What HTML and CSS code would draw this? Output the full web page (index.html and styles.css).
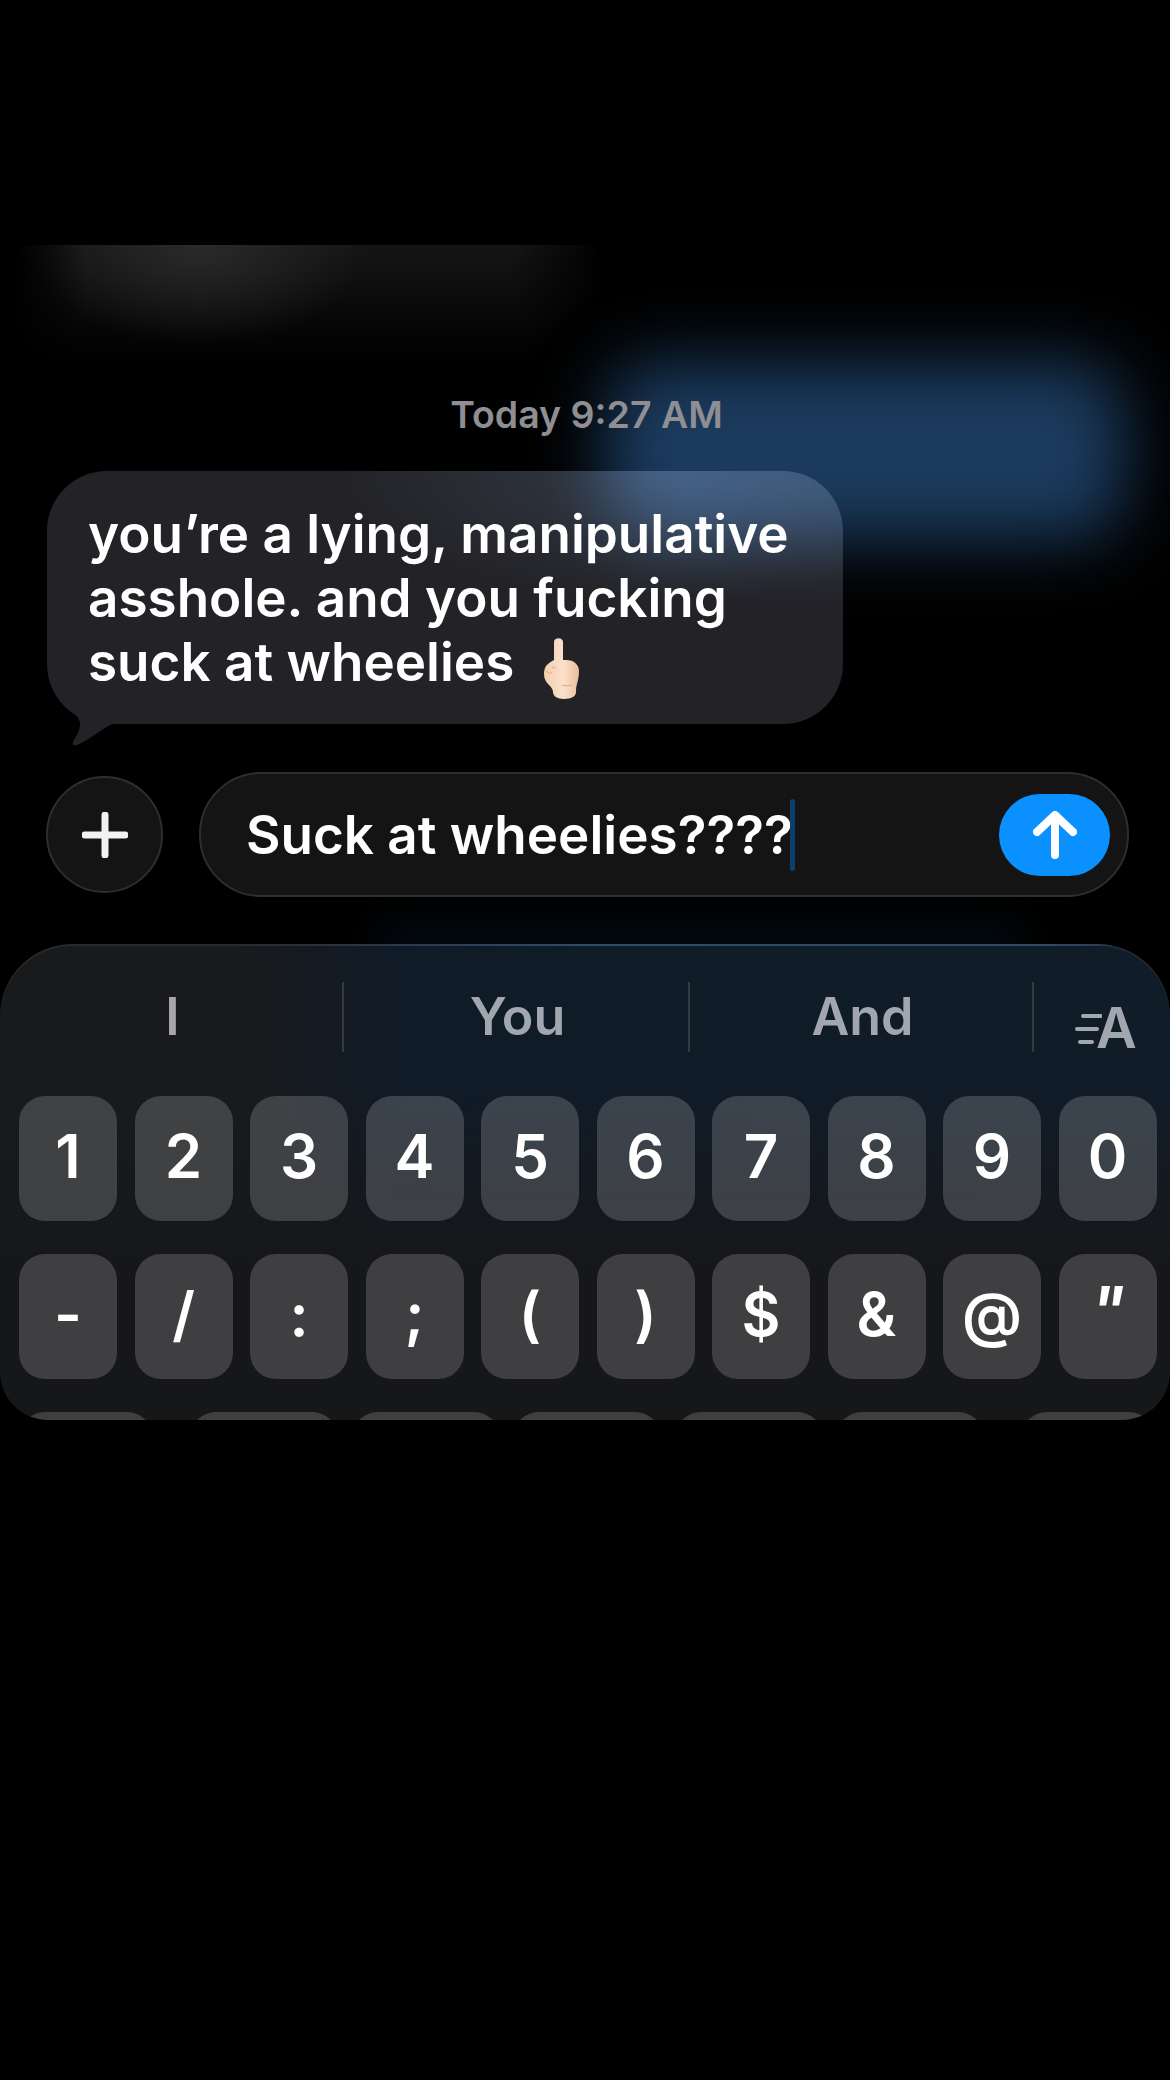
FILE: index.html
```html
<!DOCTYPE html>
<html lang="en">
<head>
    <meta charset="UTF-8">
    <meta name="viewport" content="width=device-width, initial-scale=1.0">
    <title>Messages</title>
    <link rel="stylesheet" href="styles.css">
</head>
<body>
    <div class="screen">
        <!-- blurred messages behind the focused one -->
        <div class="backdrop">
            <div class="blur-grey"></div>
            <div class="blur-blue"></div>
            <div class="blur-glow"></div>
        </div>

        <div class="thread">
            <div class="timestamp">Today 9:27 AM</div>
            <div class="bubble">
                you’re a lying, manipulative<br>
                asshole. and you fucking<br>
                suck at wheelies<svg class="emoji" viewBox="0 0 35 61" width="35" height="61">
                    <defs>
                        <linearGradient id="skin" x1="0" y1="0" x2="1" y2="0">
                            <stop offset="0" stop-color="#f3cfb2"/>
                            <stop offset="0.55" stop-color="#fbe0ca"/>
                            <stop offset="1" stop-color="#eabf9d"/>
                        </linearGradient>
                    </defs>
                    <path fill="url(#skin)" d="M10 22V4c0-5 9-5 9 0v18c4 0 8 0 11 2 3 2 5 5 5 9 0 5-1 9-2 13-1 3-1 6-1 8 0 4-4 7-12 7-7 0-11-3-11-7 0-2-1-4-4-7-3-3-5-6-5-11 0-4 1-8 4-10 2-2 4-3 6-4z"/>
                    <path fill="none" stroke="#d9a886" stroke-width="1" d="M3 33c1 3 3 3 5 1M8 28c1 3 3 3 4 1M18 47c3 1 7 1 10 0"/>
                </svg>
            </div>
            <svg class="bubble-tail" viewBox="47 660 90 90" width="90" height="90">
                <path d="M49 660C52 690 60 703 68 708C76 713 81 720 80 726C79 733 75 738 73 742C72 745 74 746 77 745C88 741 98 731 112 724L112 724C90 724 49 700 49 660Z"/>
            </svg>
        </div>

        <div class="composer">
            <div class="plus-btn">
                <svg viewBox="0 0 46 46" width="46" height="46">
                    <path d="M23 3v40M3 23h40"/>
                </svg>
            </div>
            <div class="input-box">
                <span class="input-text">Suck at wheelies????</span><span class="caret"></span>
                <div class="send-btn">
                    <svg viewBox="0 0 44 48" width="44" height="48">
                        <path d="M22 44V5M4 21L22 4l18 17"/>
                    </svg>
                </div>
            </div>
        </div>

        <div class="keyboard">
            <div class="suggestions">
                <div class="suggestion s-first">I</div>
                <div class="suggestion s-mid">You</div>
                <div class="suggestion s-last">And</div>
                <div class="text-size">
                    <svg viewBox="0 0 27 30" width="27" height="30">
                        <path d="M8 2h18M2 15h20M5 28h12"/>
                    </svg>
                    <span>A</span>
                </div>
            </div>
            <div class="key-row">
                <div class="key">1</div>
                <div class="key">2</div>
                <div class="key">3</div>
                <div class="key">4</div>
                <div class="key">5</div>
                <div class="key">6</div>
                <div class="key">7</div>
                <div class="key">8</div>
                <div class="key">9</div>
                <div class="key">0</div>
            </div>
            <div class="key-row">
                <div class="key">-</div>
                <div class="key">/</div>
                <div class="key">:</div>
                <div class="key">;</div>
                <div class="key">(</div>
                <div class="key">)</div>
                <div class="key">$</div>
                <div class="key">&amp;</div>
                <div class="key">@</div>
                <div class="key"><i>"</i></div>
            </div>
            <div class="key-row-last">
                <div class="key-wide k-first"></div>
                <div class="key-wide"></div>
                <div class="key-wide"></div>
                <div class="key-wide"></div>
                <div class="key-wide"></div>
                <div class="key-wide"></div>
                <div class="key-wide k-last"></div>
            </div>
        </div>
    </div>
</body>
</html>
```

FILE: styles.css
```css
html, body {
    margin: 0;
    background: #000;
}
body {
    font-family: Inter, "Liberation Sans", sans-serif;
    color: #fff;
}
.screen {
    position: relative;
    width: 1170px;
    height: 2080px;
    overflow: hidden;
    padding-top: 394px;
    box-sizing: border-box;
}

/* backdrop */
.backdrop {
    position: absolute;
    inset: 0;
}
.blur-grey {
    position: absolute;
    left: 14px;
    top: 245px;
    width: 590px;
    height: 115px;
    border-radius: 20px 20px 0 0;
    background:
        radial-gradient(ellipse 170px 100px at 185px 0, #2a2a2b, rgba(42,42,43,0)),
        linear-gradient(to bottom, #151516, rgba(21,21,22,0));
    -webkit-mask-image: linear-gradient(90deg, transparent 0, #000 70px, #000 500px, transparent 100%);
    mask-image: linear-gradient(90deg, transparent 0, #000 70px, #000 500px, transparent 100%);
}
.blur-blue {
    position: absolute;
    left: 605px;
    top: 362px;
    width: 520px;
    height: 178px;
    border-radius: 50px;
    background: #1b3b5e;
    filter: blur(34px);
}
.blur-glow {
    position: absolute;
    left: 380px;
    top: 925px;
    width: 640px;
    height: 30px;
    background: #030c15;
    filter: blur(18px);
}

/* thread */
.thread {
    position: relative;
    padding-left: 47px;
}
.timestamp {
    width: 1170px;
    margin-left: -47px;
    height: 44px;
    margin-bottom: 33px;
    padding-left: 3px;
    box-sizing: border-box;
    text-align: center;
    font-size: 37.5px;
    line-height: 42px;
    font-weight: 600;
    color: #8e8e93;
}
.bubble {
    width: 796px;
    height: 253px;
    box-sizing: border-box;
    padding: 31px 0 0 41px;
    border-radius: 60px;
    background:
        radial-gradient(ellipse 330px 130px at 78% 0, rgba(120,160,210,0.18), rgba(120,160,210,0)),
        rgba(230,230,255,0.153);
    font-size: 53px;
    line-height: 64px;
    font-weight: 600;
    white-space: nowrap;
}
.emoji {
    margin: -8px 0 -8px 30px;
    vertical-align: -10px;
}
.bubble-tail {
    position: absolute;
    left: 47px;
    top: 266px;
}
.bubble-tail path {
    fill: #232327;
}

/* composer */
.composer {
    position: relative;
    display: flex;
    align-items: center;
    gap: 36px;
    margin-top: 48px;
    padding: 0 41px 0 46px;
}
.plus-btn {
    flex: none;
    width: 117px;
    height: 117px;
    box-sizing: border-box;
    display: flex;
    align-items: center;
    justify-content: center;
    border: 2px solid #2e2e30;
    border-radius: 50%;
    background: #141414;
}
.plus-btn path {
    fill: none;
    stroke: #f2f2f2;
    stroke-width: 7;
    stroke-linecap: round;
}
.input-box {
    flex: 1;
    height: 125px;
    box-sizing: border-box;
    display: flex;
    align-items: center;
    padding: 0 17px 0 45px;
    border: 2px solid #2e2e30;
    border-radius: 62px;
    background: #141414;
}
.input-text {
    font-size: 53px;
    font-weight: 600;
    line-height: 72px;
    white-space: nowrap;
}
.caret {
    width: 5px;
    height: 72px;
    margin-left: -3px;
    border-radius: 3px;
    background: #0c3f6b;
}
.send-btn {
    flex: none;
    margin-left: auto;
    width: 111px;
    height: 82px;
    display: flex;
    align-items: center;
    justify-content: center;
    border-radius: 41px;
    background: #0a91ff;
}
.send-btn path {
    fill: none;
    stroke: #fff;
    stroke-width: 8;
    stroke-linecap: round;
    stroke-linejoin: round;
}

/* keyboard */
.keyboard {
    position: relative;
    height: 476px;
    box-sizing: border-box;
    margin-top: 47px;
    padding-top: 38px;
    overflow: hidden;
    border-radius: 72px 72px 48px 48px;
    box-shadow: inset 0 2px 0 rgba(255,255,255,0.07);
    background:
        linear-gradient(90deg, rgba(50,90,140,0) 20%, rgba(50,90,140,0.55) 50%, rgba(50,90,140,0.5) 90%, rgba(50,90,140,0)) 0 0 / 100% 2px no-repeat,
        linear-gradient(to bottom, rgba(22,23,25,0) 30%, #161719 68%),
        linear-gradient(90deg, #181a1c 240px, #101b28 410px, #111c29 100%);
}
.suggestions {
    display: flex;
    height: 70px;
    margin-bottom: 44px;
}
.suggestion {
    box-sizing: border-box;
    padding-left: 3px;
    text-align: center;
    font-size: 52px;
    font-weight: 600;
    line-height: 70px;
    color: #a2a7af;
    border-right: 2px solid #33393f;
}
.s-first { width: 344px; color: #a8a8aa; }
.s-mid { width: 346px; }
.s-last { width: 344px; }
.text-size {
    flex: 1;
    position: relative;
    color: #a2a7af;
    font-size: 56px;
    font-weight: 600;
    line-height: 70px;
}
.text-size svg {
    position: absolute;
    left: 41px;
    top: 32px;
}
.text-size svg path {
    fill: none;
    stroke: #a2a7af;
    stroke-width: 4;
    stroke-linecap: round;
}
.text-size span {
    position: absolute;
    left: 62px;
    top: 11px;
}
.key-row {
    display: grid;
    grid-template-columns: repeat(10, 98px);
    column-gap: 17.5px;
    padding-left: 19px;
    margin-bottom: 33px;
}
.key {
    height: 125px;
    box-sizing: border-box;
    padding-bottom: 6px;
    display: flex;
    align-items: center;
    justify-content: center;
    border-radius: 26px;
    background: rgba(255,255,255,0.175);
    font-size: 60px;
    font-weight: 600;
}
.key i {
    font-size: 66px;
    margin-top: -8px;
}
.key-row-last {
    display: flex;
    gap: 13.5px;
    padding-left: 19px;
}
.key-wide {
    width: 148px;
    height: 125px;
    border-radius: 26px;
    background: rgba(255,255,255,0.175);
}
.k-first {
    width: 134px;
    margin-right: 23.5px;
}
.k-last {
    width: 134px;
    margin-left: 23px;
}
```
